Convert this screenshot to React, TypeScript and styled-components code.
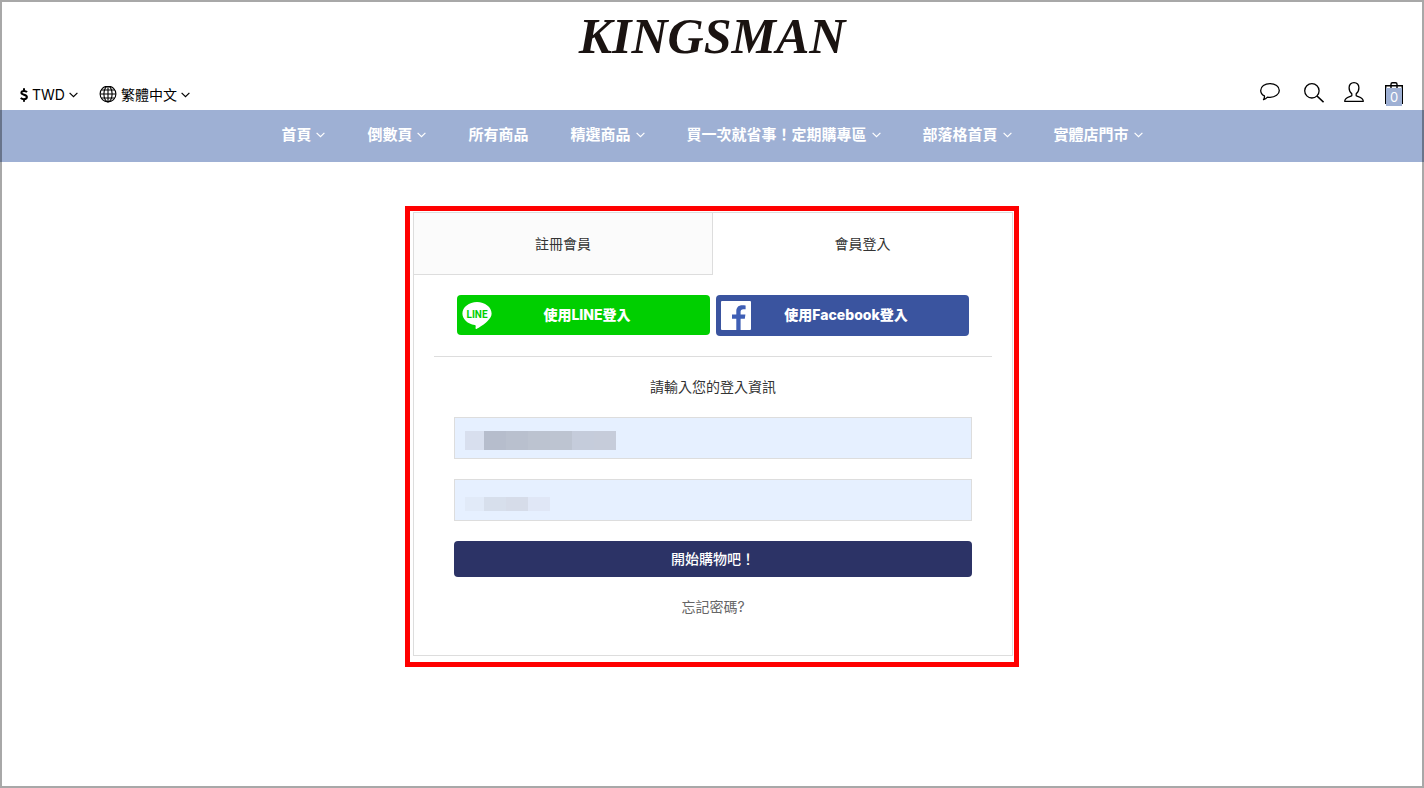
import React from "react";
import styled, { createGlobalStyle } from "styled-components";

const GlobalStyle = createGlobalStyle`
  *, *::before, *::after { box-sizing: border-box; }
  body {
    margin: 0;
    background: #fff;
    color: #333;
    font-family: Inter, "Noto Sans CJK TC", sans-serif;
    font-size: 14px;
    line-height: 20px;
  }
  button, input { font: inherit; color: inherit; }
  a { color: inherit; text-decoration: none; }
  svg { display: block; flex: none; }
`;

const Page = styled.div`
  min-height: 100vh;
`;

const PageFrame = styled.div`
  position: fixed;
  inset: 0;
  z-index: 10;
  border: 2px solid rgba(0, 0, 0, 0.34);
  pointer-events: none;
`;

const Logo = styled.a`
  display: block;
  padding-bottom: 8px;
  text-align: center;
  font-family: "Liberation Serif", serif;
  font-size: 50px;
  font-weight: 700;
  font-style: italic;
  line-height: 72px;
  color: #1a1311;
`;

const Toolbar = styled.div`
  display: flex;
  align-items: flex-start;
  justify-content: space-between;
  height: 30px;
  padding: 0 20px;
  color: #000;
`;

const ToolGroup = styled.div<{ $gap: number }>`
  display: flex;
  align-items: center;
  gap: ${(p) => p.$gap}px;
`;

const ToolButton = styled.button`
  display: flex;
  align-items: center;
  gap: 4px;
  height: 30px;
  padding: 0;
  border: 0;
  background: none;
  cursor: pointer;
`;

const IconButton = styled.button`
  position: relative;
  display: block;
  padding: 0;
  border: 0;
  background: none;
  cursor: pointer;
`;

const CartCount = styled.span`
  position: absolute;
  left: 2px;
  top: 8px;
  width: 16px;
  height: 18px;
  background: #9eb0d4;
  color: #fff;
  font-size: 13px;
  line-height: 18px;
  text-align: center;
`;

const Nav = styled.nav`
  display: flex;
  flex-wrap: wrap;
  align-items: center;
  justify-content: center;
  column-gap: 42px;
  min-height: 52px;
  padding-bottom: 2px;
  background: #9eb0d4;
  color: #fff;
`;

const NavLink = styled.a`
  display: flex;
  align-items: center;
  gap: 5px;
  font-size: 15px;
  font-weight: 700;
`;

const Main = styled.main`
  max-width: 614px;
  margin: 44px auto;
  padding: 1px 1px 6px 3px;
  border: 5px solid #f00;
`;

const Card = styled.section`
  border: 1px solid #ddd;
`;

const Tabs = styled.div`
  display: flex;
`;

const Tab = styled.button<{ $active?: boolean }>`
  width: 50%;
  height: 62px;
  padding: 0;
  border: 0 solid #ddd;
  border-width: ${(p) => (p.$active ? "0" : "0 1px 1px 0")};
  background: ${(p) => (p.$active ? "#fff" : "#fbfbfb")};
  cursor: pointer;
`;

const Panel = styled.div`
  padding: 20px 20px 38px;
`;

const SocialRow = styled.div`
  display: flex;
  align-items: flex-start;
  gap: 6px;
  padding: 0 23px 20px;
  border-bottom: 1px solid #ddd;
`;

const SocialButton = styled.button<{ $color: string; $height: number }>`
  display: flex;
  flex: 1;
  align-items: flex-start;
  height: ${(p) => p.$height}px;
  padding: 5px 28px 0 5px;
  border: 0;
  border-radius: 4px;
  background: ${(p) => p.$color};
  color: #fff;
  font-weight: 800;
  line-height: 30px;
  cursor: pointer;
`;

const SocialLabel = styled.span`
  flex: 1;
  text-align: center;
`;

const Form = styled.form`
  display: flex;
  flex-direction: column;
  gap: 20px;
  padding: 20px 20px 0;
`;

const FormTitle = styled.p`
  margin: 0;
  text-align: center;
`;

const Field = styled.div`
  position: relative;
`;

const TextInput = styled.input`
  display: block;
  width: 100%;
  height: 42px;
  padding: 0 10px;
  border: 1px solid #ddd;
  border-radius: 0;
  background: #e6f0ff;
`;

const Mask = styled.span<{ $top: number; $height: number }>`
  position: absolute;
  left: 11px;
  top: ${(p) => p.$top}px;
  display: flex;
  height: ${(p) => p.$height}px;
  pointer-events: none;
`;

const MaskBlock = styled.span<{ $color: string }>`
  width: 22px;
  background: ${(p) => p.$color};
  &:first-child { width: 19px; }
`;

const SubmitButton = styled.button`
  height: 36px;
  padding: 0;
  border: 0;
  border-radius: 4px;
  background: #2c3366;
  color: #fff;
  font-weight: 500;
  cursor: pointer;
`;

const ForgotLink = styled.a`
  align-self: center;
  color: #666;
`;

const Chevron = () => (
  <svg width="9" height="6" viewBox="0 0 9 6" fill="none" stroke="currentColor" strokeWidth="1.2" aria-hidden="true">
    <path d="M.6.8 4.5 4.7 8.4.8" />
  </svg>
);

const DollarIcon = () => (
  <svg width="8" height="14" viewBox="0 0 8 14" fill="none" stroke="currentColor" strokeWidth="2" aria-hidden="true">
    <path d="M7 4.2C6.3 3.3 5.3 2.9 4.1 2.9 2.5 2.9 1.4 3.6 1.4 4.8 1.4 7.3 6.9 6.1 6.9 9.1 6.9 10.4 5.7 11.2 4 11.2 2.7 11.2 1.5 10.7.7 9.8M4 .2V3M4 11V13.8" />
  </svg>
);

const GlobeIcon = () => (
  <svg width="18" height="18" viewBox="0 0 18 18" fill="none" stroke="currentColor" strokeWidth="1.1" aria-hidden="true">
    <circle cx="9" cy="8" r="7.9" />
    <ellipse cx="9" cy="8" rx="4.1" ry="7.9" />
    <path d="M9 0v16M1.1 8h15.8M2.3 4h13.4M2.3 12h13.4" />
  </svg>
);

const ChatIcon = () => (
  <svg width="20" height="24" viewBox="0 0 20 24" fill="none" stroke="currentColor" strokeWidth="1.3" strokeLinejoin="round" aria-hidden="true">
    <path d="M10 3.6c5.200 0 9.300 2.900 9.300 6.800s-4.100 6.900-9.300 6.900c-.9 0-1.700-.1-2.500-.2-1.200 1.300-2.300 2.100-4 2.500.8-1 1.100-2.200.9-3.700C2.100 14.700.7 12.700.7 10.400c0-3.900 4.100-6.800 9.300-6.800Z" />
  </svg>
);

const SearchIcon = () => (
  <svg width="20" height="24" viewBox="0 0 20 24" fill="none" stroke="currentColor" strokeWidth="1.3" aria-hidden="true">
    <circle cx="7.900" cy="10.800" r="7.200" />
    <path d="m13 16 6.600 6.200" strokeWidth="1.7" />
  </svg>
);

const UserIcon = () => (
  <svg width="20" height="24" viewBox="0 0 20 24" fill="none" stroke="currentColor" strokeWidth="1.3" strokeLinejoin="round" aria-hidden="true">
    <path d="M10 2.700c-3 0-4.900 2-4.900 5 0 2.700 1.100 4.800 2.700 6.100v2C5.600 17 .8 17.100.7 21.300h18.600C19.200 17.100 14.400 17 12.200 15.800v-2c1.600-1.300 2.700-3.400 2.700-6.100 0-3-1.900-5-4.900-5Z" />
  </svg>
);

const CartIcon = () => (
  <svg width="20" height="24" viewBox="0 0 20 24" fill="none" stroke="currentColor" strokeWidth="1.400" aria-hidden="true">
    <path d="M1.700 24V5.700h16.600V24M7 8V4.200Q7 2.700 8.500 2.700h3Q13 2.700 13 4.200V8" />
  </svg>
);

const LineIcon = () => (
  <svg width="30" height="30" viewBox="0 0 30 30" aria-hidden="true">
    <path fill="#fff" d="M15 2C7 2 .4 7.200.4 13.600c0 5.700 5.300 10.500 12.300 11.400 1.200.3 1.100.9.9 2.300-.2 1.300-.1 2.200 1.300 1.500 1.500-.7 7.700-4.300 10.700-7.700 2.600-2.600 4-4.800 4-7.500C29.600 7.200 23 2 15 2Z" />
    <text x="15" y="18" textAnchor="middle" fontFamily="Roboto, sans-serif" fontWeight="700" fontSize="10" fill="#00cf00">LINE</text>
  </svg>
);

const FacebookIcon = () => (
  <svg width="30" height="30" viewBox="0 0 30 30" aria-hidden="true">
    <rect y="1" width="30" height="29" rx="1" fill="#fff" />
    <path fill="#3f5fb5" d="M15.300 30V18.800h-4.300v-4.300h4.300v-3.300c0-3.900 2.300-6 5.900-6 1.200 0 2.300.1 3.400.2v3.900h-2.300c-1.900 0-2.700 1-2.700 2.500v2.700h4.800l-.6 4.300h-4.200V30Z" />
  </svg>
);

const navItems = [
  { label: "首頁", menu: true },
  { label: "倒數頁", menu: true },
  { label: "所有商品", menu: false },
  { label: "精選商品", menu: true },
  { label: "買一次就省事！定期購專區", menu: true },
  { label: "部落格首頁", menu: true },
  { label: "實體店門市", menu: true },
];

const accountMask = ["#d8dfee", "#b6bdcc", "#b9c0ce", "#bcc3d0", "#bdc4d1", "#c5ccdb", "#c6ccda"];
const passwordMask = ["#e1eaf8", "#d7dfec", "#d6dce9", "#e0e7f6"];

export default function App() {
  return (
    <Page>
      <GlobalStyle />
      <PageFrame />
      <header>
        <Logo href="#">KINGSMAN</Logo>
        <Toolbar>
          <ToolGroup $gap={21}>
            <ToolButton type="button">
              <DollarIcon />
              TWD
              <Chevron />
            </ToolButton>
            <ToolButton type="button">
              <GlobeIcon />
              繁體中文
              <Chevron />
            </ToolButton>
          </ToolGroup>
          <ToolGroup $gap={24}>
            <IconButton type="button" aria-label="訊息"><ChatIcon /></IconButton>
            <ToolGroup $gap={20}>
              <IconButton type="button" aria-label="搜尋"><SearchIcon /></IconButton>
              <IconButton type="button" aria-label="會員"><UserIcon /></IconButton>
              <IconButton type="button" aria-label="購物車">
                <CartIcon />
                <CartCount>0</CartCount>
              </IconButton>
            </ToolGroup>
          </ToolGroup>
        </Toolbar>
        <Nav>
          {navItems.map((item) => (
            <NavLink href="#" key={item.label}>
              {item.label}
              {item.menu && <Chevron />}
            </NavLink>
          ))}
        </Nav>
      </header>
      <Main>
        <Card>
          <Tabs role="tablist">
            <Tab type="button" role="tab" aria-selected={false}>註冊會員</Tab>
            <Tab type="button" role="tab" aria-selected $active>會員登入</Tab>
          </Tabs>
          <Panel>
            <SocialRow>
              <SocialButton type="button" $color="#00cf00" $height={40}>
                <LineIcon />
                <SocialLabel>使用LINE登入</SocialLabel>
              </SocialButton>
              <SocialButton type="button" $color="#3a549f" $height={41}>
                <FacebookIcon />
                <SocialLabel>使用Facebook登入</SocialLabel>
              </SocialButton>
            </SocialRow>
            <Form onSubmit={(e) => e.preventDefault()}>
              <FormTitle>請輸入您的登入資訊</FormTitle>
              <Field>
                <TextInput type="text" aria-label="帳號" />
                <Mask $top={14} $height={19}>
                  {accountMask.map((c) => <MaskBlock key={c} $color={c} />)}
                </Mask>
              </Field>
              <Field>
                <TextInput type="password" aria-label="密碼" />
                <Mask $top={18} $height={14}>
                  {passwordMask.map((c) => <MaskBlock key={c} $color={c} />)}
                </Mask>
              </Field>
              <SubmitButton type="submit">開始購物吧！</SubmitButton>
              <ForgotLink href="#">忘記密碼?</ForgotLink>
            </Form>
          </Panel>
        </Card>
      </Main>
    </Page>
  );
}
